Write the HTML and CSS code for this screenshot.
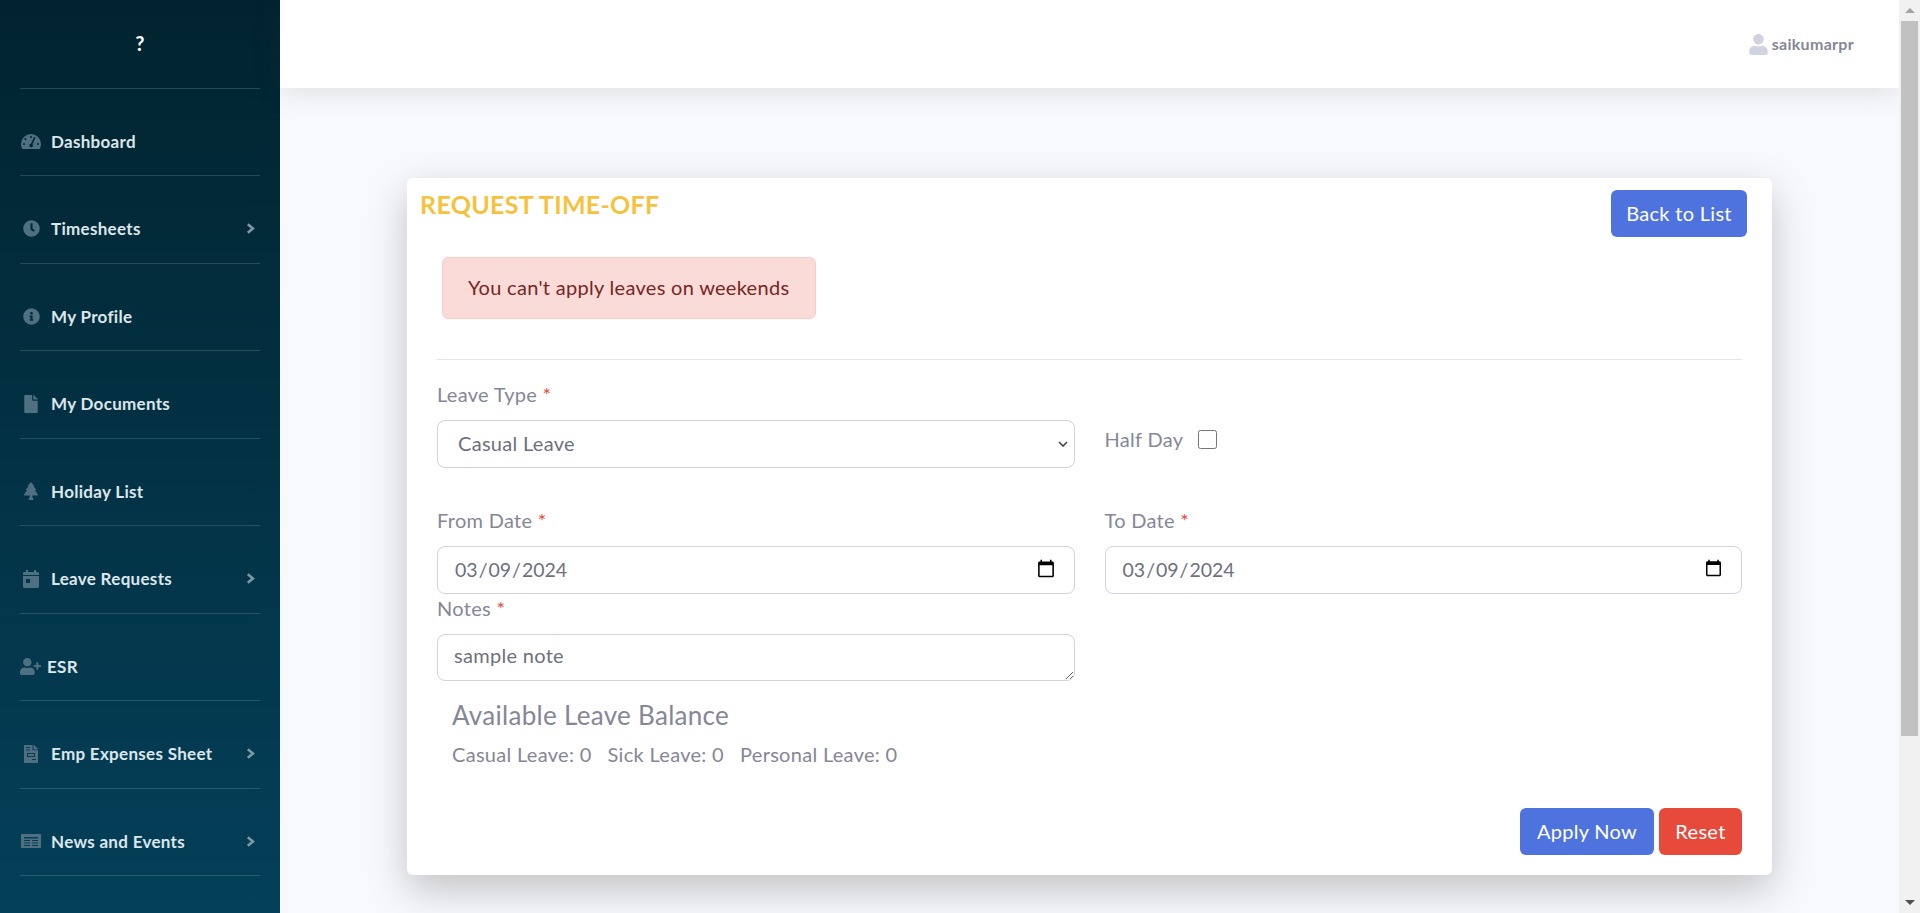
FILE: index.html
```html
<!DOCTYPE html>
<html lang="en">
<head>
    <meta charset="UTF-8">
    <title>Request Time-Off</title>
    <link rel="stylesheet" href="styles.css">
</head>
<body>
    <div class="app">
        <nav class="sidebar">
            <div class="brand">?</div>
            <a class="nav-item">
                <span class="nav-icon"><svg width="20" height="15" viewBox="0 0 20 15"><path fill-rule="evenodd" d="M10 0a10 10 0 0 1 10 10c0 1.800-.4 3.500-1.200 5H1.200C.4 13.500 0 11.800 0 10A10 10 0 0 1 10 0zM9.200 2v2h1.600V2zM4.200 3.800 3.100 4.900 4.500 6.300 5.600 5.200zM14.600 3.500 11.500 10.200a1.800 1.800 0 1 1-1.500-.5L13 3zM2 9.200v1.600h2V9.200zM16 9.200v1.600h2V9.200z"/></svg></span>
                <span>Dashboard</span>
            </a>
            <a class="nav-item">
                <span class="nav-icon"><svg width="17" height="17" viewBox="0 0 512 512"><path d="M256,8C119,8,8,119,8,256S119,504,256,504,504,393,504,256,393,8,256,8Zm92.490,313h0l-20,25a16,16,0,0,1-22.490,2.500h0l-67-49.720a40,40,0,0,1-15-31.230V112a16,16,0,0,1,16-16h32a16,16,0,0,1,16,16V256l58,42.500A16,16,0,0,1,348.490,321Z"/></svg></span>
                <span>Timesheets</span>
                <svg class="chevron" viewBox="0 0 9 11"><path d="M1.800 1.200 6.900 5.500 1.800 9.800"/></svg>
            </a>
            <a class="nav-item">
                <span class="nav-icon"><svg width="17" height="17" viewBox="0 0 512 512"><path d="M256 8C119.043 8 8 119.083 8 256c0 136.997 111.043 248 248 248s248-111.003 248-248C504 119.083 392.957 8 256 8zm0 110c23.196 0 42 18.804 42 42s-18.804 42-42 42-42-18.804-42-42 18.804-42 42-42zm56 254c0 6.627-5.373 12-12 12h-88c-6.627 0-12-5.373-12-12v-24c0-6.627 5.373-12 12-12h12v-64h-12c-6.627 0-12-5.373-12-12v-24c0-6.627 5.373-12 12-12h64c6.627 0 12 5.373 12 12v100h12c6.627 0 12 5.373 12 12v24z"/></svg></span>
                <span>My Profile</span>
            </a>
            <a class="nav-item">
                <span class="nav-icon"><svg width="14" height="18" viewBox="0 0 384 512"><path d="M224 136V0H24C10.700 0 0 10.700 0 24v464c0 13.300 10.700 24 24 24h336c13.300 0 24-10.700 24-24V160H248c-13.200 0-24-10.800-24-24zm160-14.100v6.100H256V0h6.100c6.400 0 12.500 2.500 17 7l97.900 98c4.500 4.500 7 10.600 7 16.900z"/></svg></span>
                <span>My Documents</span>
            </a>
            <a class="nav-item">
                <span class="nav-icon"><svg width="14" height="18" viewBox="0 0 14 18"><path d="M7 0l3.600 4.200H9.400l3.200 3.900h-1.700L14 12.700c.2.400 0 .7-.4.700H8.300V15l1.300 2.400c.1.300 0 .6-.4.600H4.800c-.4 0-.5-.3-.4-.6L5.700 15v-1.600H.4c-.4 0-.6-.3-.4-.7l3.100-4.600H1.400l3.200-3.900H3.400z"/></svg></span>
                <span>Holiday List</span>
            </a>
            <a class="nav-item">
                <span class="nav-icon"><svg width="16" height="18" viewBox="0 0 16 18"><path fill-rule="evenodd" d="M3 0h2v2h6V0h2v2h1.500C15.300 2 16 2.700 16 3.500V5H0V3.500C0 2.700.7 2 1.500 2H3zM0 6h16v10.500c0 .8-.7 1.500-1.500 1.500h-13C.7 18 0 17.300 0 16.500zM3 9v4h4V9z"/></svg></span>
                <span>Leave Requests</span>
                <svg class="chevron" viewBox="0 0 9 11"><path d="M1.800 1.200 6.900 5.500 1.800 9.800"/></svg>
            </a>
            <a class="nav-item nav-item-tight">
                <svg class="plus-icon" width="21" height="17" viewBox="0 0 640 512"><path d="M624 208h-64v-64c0-8.800-7.200-16-16-16h-32c-8.800 0-16 7.200-16 16v64h-64c-8.800 0-16 7.200-16 16v32c0 8.800 7.200 16 16 16h64v64c0 8.800 7.200 16 16 16h32c8.800 0 16-7.200 16-16v-64h64c8.800 0 16-7.200 16-16v-32c0-8.800-7.200-16-16-16zm-400 48c70.700 0 128-57.300 128-128S294.700 0 224 0 96 57.300 96 128s57.300 128 128 128zm89.600 32h-16.700c-22.200 10.200-46.900 16-72.900 16s-50.600-5.800-72.900-16h-16.700C60.200 288 0 348.200 0 422.400V464c0 26.500 21.500 48 48 48h352c26.500 0 48-21.500 48-48v-41.600c0-74.200-60.200-134.400-134.400-134.400z"/></svg>
                <span>ESR</span>
            </a>
            <a class="nav-item">
                <span class="nav-icon"><svg width="14" height="18" viewBox="0 0 14 18"><path fill-rule="evenodd" d="M1 0h7.500v4.500c0 .4.300.8.800.8H14V17c0 .6-.4 1-1 1H1c-.6 0-1-.4-1-1V1c0-.6.400-1 1-1zM9.500 0c.3 0 .5.100.7.300l3.500 3.500c.2.200.3.400.3.700H9.500zM2 2v1h4V2zM2 4.500v1h4v-1zM3 8v4h8V8zm1 1h6v2H4zM8 14v1h4v-1z"/></svg></span>
                <span>Emp Expenses Sheet</span>
                <svg class="chevron" viewBox="0 0 9 11"><path d="M1.800 1.200 6.900 5.500 1.800 9.800"/></svg>
            </a>
            <a class="nav-item">
                <span class="nav-icon"><svg width="20" height="14" viewBox="0 0 20 14"><path fill-rule="evenodd" d="M1 0h18c.6 0 1 .4 1 1v12c0 .6-.4 1-1 1H1c-.6 0-1-.4-1-1V1c0-.6.400-1 1-1zM3 3v1.500h14V3zM3 6v1h6V6zM3 8.500v1h6v-1zM3 11v1h6v-1zM11 6v1h6V6zM11 8.500v1h6v-1zM11 11v1h6v-1z"/></svg></span>
                <span>News and Events</span>
                <svg class="chevron" viewBox="0 0 9 11"><path d="M1.800 1.200 6.900 5.500 1.800 9.800"/></svg>
            </a>
        </nav>

        <div class="main">
            <header class="topbar">
                <svg class="user-icon" width="19" height="21" viewBox="0 0 448 512"><path d="M224 256c70.700 0 128-57.300 128-128S294.700 0 224 0 96 57.300 96 128s57.300 128 128 128zm89.600 32h-16.700c-22.200 10.200-46.900 16-72.900 16s-50.600-5.800-72.900-16h-16.700C60.200 288 0 348.200 0 422.400V464c0 26.500 21.500 48 48 48h352c26.500 0 48-21.500 48-48v-41.600c0-74.200-60.200-134.400-134.400-134.400z"/></svg>
                <span class="user-name">saikumarpr</span>
            </header>

            <section class="card">
                <div class="card-head">
                    <h1 class="card-title">REQUEST TIME-OFF</h1>
                    <button class="btn btn-blue btn-back" type="button">Back to List</button>
                </div>
                <div class="alert">You can't apply leaves on weekends</div>
                <form class="form-body">
                    <hr class="rule">
                    <div class="row row-first">
                        <div>
                            <label class="field-label">Leave Type <span class="req">*</span></label>
                            <select class="control control-select">
                                <option>Casual Leave</option>
                                <option>Sick Leave</option>
                                <option>Personal Leave</option>
                            </select>
                        </div>
                        <div class="half-day">
                            <span>Half Day</span>
                            <input class="check" type="checkbox">
                        </div>
                    </div>
                    <div class="row row-dates">
                        <div>
                            <label class="field-label">From Date <span class="req">*</span></label>
                            <input class="control control-date" type="date" value="2024-03-09">
                        </div>
                        <div>
                            <label class="field-label">To Date <span class="req">*</span></label>
                            <input class="control control-date" type="date" value="2024-03-09">
                        </div>
                    </div>
                    <div class="row row-notes">
                        <div>
                            <label class="field-label">Notes <span class="req">*</span></label>
                            <textarea class="control control-area">sample note</textarea>
                        </div>
                    </div>
                    <div class="balance">
                        <h2 class="balance-title">Available Leave Balance</h2>
                        <p class="balance-list">
                            <span>Casual Leave: 0</span>
                            <span>Sick Leave: 0</span>
                            <span>Personal Leave: 0</span>
                        </p>
                    </div>
                    <div class="actions">
                        <button class="btn btn-blue btn-apply" type="button">Apply Now</button>
                        <button class="btn btn-red btn-reset" type="button">Reset</button>
                    </div>
                </form>
            </section>
        </div>

        <div class="scrollbar">
            <div class="arrow arrow-up"></div>
            <div class="track"><div class="thumb"></div></div>
            <div class="arrow arrow-down"></div>
        </div>
    </div>
</body>
</html>
```

FILE: styles.css
```css
*{margin:0;padding:0;box-sizing:border-box;}
html,body{height:100%;overflow:hidden;}
body{
    font-family:"Lato","Noto Sans",sans-serif;
    font-size:20px;
    letter-spacing:.3px;
    color:#858796;
    background:#f8f9fc;
}
.app{
    display:flex;
    height:913px;
}

/* sidebar */
.sidebar{
    width:280px;
    flex:none;
    padding:0 20px;
    background:linear-gradient(180deg,#01232f 0%,#044059 100%);
    color:#dde6ea;
}
.brand{
    height:88.5px;
    padding-top:31px;
    line-height:24px;
    text-align:center;
    font-size:20px;
    font-weight:700;
    color:#fff;
    border-bottom:1px solid rgba(255,255,255,.15);
}
.nav-item{
    display:flex;
    align-items:center;
    height:87.5px;
    padding-top:19px;
    font-size:17px;
    font-weight:700;
    border-bottom:1px solid rgba(255,255,255,.15);
}
.nav-icon{
    width:22px;
    margin-right:9px;
    display:flex;
    justify-content:center;
}
.nav-icon svg,.plus-icon{
    fill:#4f7080;
}
.plus-icon{
    margin-right:6px;
}
.chevron{
    width:9px;
    height:11px;
    margin-left:auto;
    margin-right:5px;
    fill:none;
    stroke:#7d97a3;
    stroke-width:2.6;
}

/* top bar */
.main{
    flex:1;
    min-width:0;
}
.topbar{
    height:88px;
    padding-right:45px;
    display:flex;
    align-items:center;
    justify-content:flex-end;
    background:#fff;
    box-shadow:0 .15rem 1.75rem rgba(58,59,69,.15);
}
.user-icon{
    fill:#d1d3e2;
    margin-right:4px;
}
.user-name{
    font-size:16px;
    font-weight:700;
    margin-bottom:2px;
}

/* card */
.card{
    width:1365px;
    margin:90px auto 0;
    height:697px;
    background:#fff;
    border-radius:6px;
    box-shadow:0 .9rem 2.5rem rgba(0,0,0,.22);
}
.card-head{
    display:flex;
    justify-content:space-between;
    align-items:flex-start;
    padding:12px 25px 0 13px;
}
.card-title{
    font-size:25px;
    line-height:28px;
    font-weight:700;
    color:#f6c23e;
}
.btn{
    border:none;
    border-radius:6px;
    padding-bottom:2px;
    font-family:inherit;
    font-size:20px;
    letter-spacing:.3px;
    color:#fff;
}
.btn-blue{background:#4e73df;}
.btn-red{background:#e74a3b;}
.btn-back{width:136px;height:47px;}
.btn-apply{width:134px;height:47px;}
.btn-reset{width:83px;height:47px;}
.alert{
    width:374px;
    height:62px;
    margin:20px 0 0 35px;
    padding-left:25px;
    line-height:58px;
    color:#78261f;
    background:#fadbd8;
    border:1px solid #f8cdc9;
    border-radius:6px;
}
.form-body{
    padding:0 30px;
}
.rule{
    margin-top:40px;
    border:none;
    border-top:1px solid #e3e6f0;
}
.row{
    display:grid;
    grid-template-columns:1fr 1fr;
    column-gap:30px;
}
.row-first{margin-top:22px;}
.row-dates{margin-top:40px;}
.row-notes{margin-top:2px;}
.field-label{
    display:block;
    line-height:24px;
    margin-bottom:14px;
}
.req{color:#e74a3b;}
.control{
    display:block;
    width:100%;
    height:48px;
    padding:0 16px;
    font-family:inherit;
    font-size:20px;
    letter-spacing:.3px;
    color:#6e707e;
    background:#fff;
    border:1px solid #d1d3e2;
    border-radius:8px;
}
.control-select{
    appearance:none;
    padding:0 36px 2px 20px;
    background:#fff url("data:image/svg+xml,%3Csvg xmlns='http://www.w3.org/2000/svg' width='10' height='6'%3E%3Cpath d='M1 1l4 4 4-4' fill='none' stroke='%23444' stroke-width='1.6'/%3E%3C/svg%3E") no-repeat right 6px center;
}
.control-date{
    padding-bottom:2px;
    font-size:19.5px;
    letter-spacing:0;
}
.control-area{
    height:47px;
    padding:8px 16px 0;
    line-height:24px;
}
.half-day{
    display:flex;
    align-items:center;
    gap:15px;
    height:24px;
    margin-top:45px;
}
.check{
    width:19px;
    height:19px;
}
.balance{
    padding-left:15px;
}
.balance-title{
    margin-top:19px;
    font-size:26px;
    line-height:30px;
    font-weight:400;
}
.balance-list{
    display:flex;
    gap:16px;
    margin-top:12px;
    line-height:24px;
}
.actions{
    display:flex;
    justify-content:flex-end;
    gap:5px;
    margin-top:42px;
}

/* page scrollbar */
.scrollbar{
    width:21px;
    flex:none;
    display:flex;
    flex-direction:column;
    background:#f1f1f1;
}
.arrow{
    height:21px;
    flex:none;
    display:flex;
    align-items:center;
    justify-content:center;
}
.arrow::before{
    content:"";
    border-left:5px solid transparent;
    border-right:5px solid transparent;
}
.arrow-up::before{border-bottom:5px solid #a3a3a3;}
.arrow-down::before{border-top:5px solid #505050;}
.track{
    flex:1;
    padding:0 2px;
}
.thumb{
    height:715px;
    background:#c1c1c1;
}
```
